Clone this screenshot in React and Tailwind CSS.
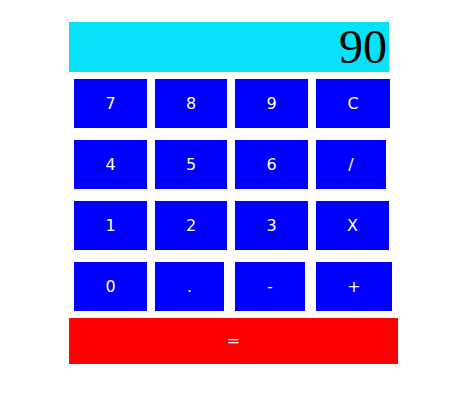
import React from 'react';

const rows = [
  [['7', 'w-[73px]'], ['8', 'w-[72px]'], ['9', 'w-[73px]'], ['C', 'w-[74px]']],
  [['4', 'w-[73px]'], ['5', 'w-[72px]'], ['6', 'w-[73px]'], ['/', 'w-[70px]']],
  [['1', 'w-[73px]'], ['2', 'w-[72px]'], ['3', 'w-[73px]'], ['X', 'w-[73px]']],
  [['0', 'w-[73px]'], ['.', 'w-[69px]'], ['-', 'w-[70px]'], ['+', 'w-[76px]']],
];

const Key = ({ label, width }) => (
  <button
    type="button"
    className={`${width} h-[49px] bg-[#0000ff] text-white text-[16px] flex items-center justify-center`}
  >
    {label}
  </button>
);

export default function App() {
  return (
    <div className="w-[462px] h-[410px] bg-white pt-[22px] pl-[69px] font-['DejaVu_Sans',Verdana,sans-serif]">
      <div className="w-[320px] h-[50px] bg-[#08e2f8] text-right pr-[2px] text-[48px] leading-[50px] text-black font-['Liberation_Serif','Times_New_Roman',serif]">
        90
      </div>
      <div className="flex flex-col gap-[12px] mt-[7px] ml-[5px]">
        {rows.map((row, i) => (
          <div key={i} className="grid grid-cols-[81px_80px_81px_auto] justify-items-start">
            {row.map(([label, width]) => (
              <Key key={label} label={label} width={width} />
            ))}
          </div>
        ))}
      </div>
      <button
        type="button"
        className="mt-[7px] w-[329px] h-[46px] bg-[#ff0000] text-white text-[16px] flex items-center justify-center"
      >
        =
      </button>
    </div>
  );
}
